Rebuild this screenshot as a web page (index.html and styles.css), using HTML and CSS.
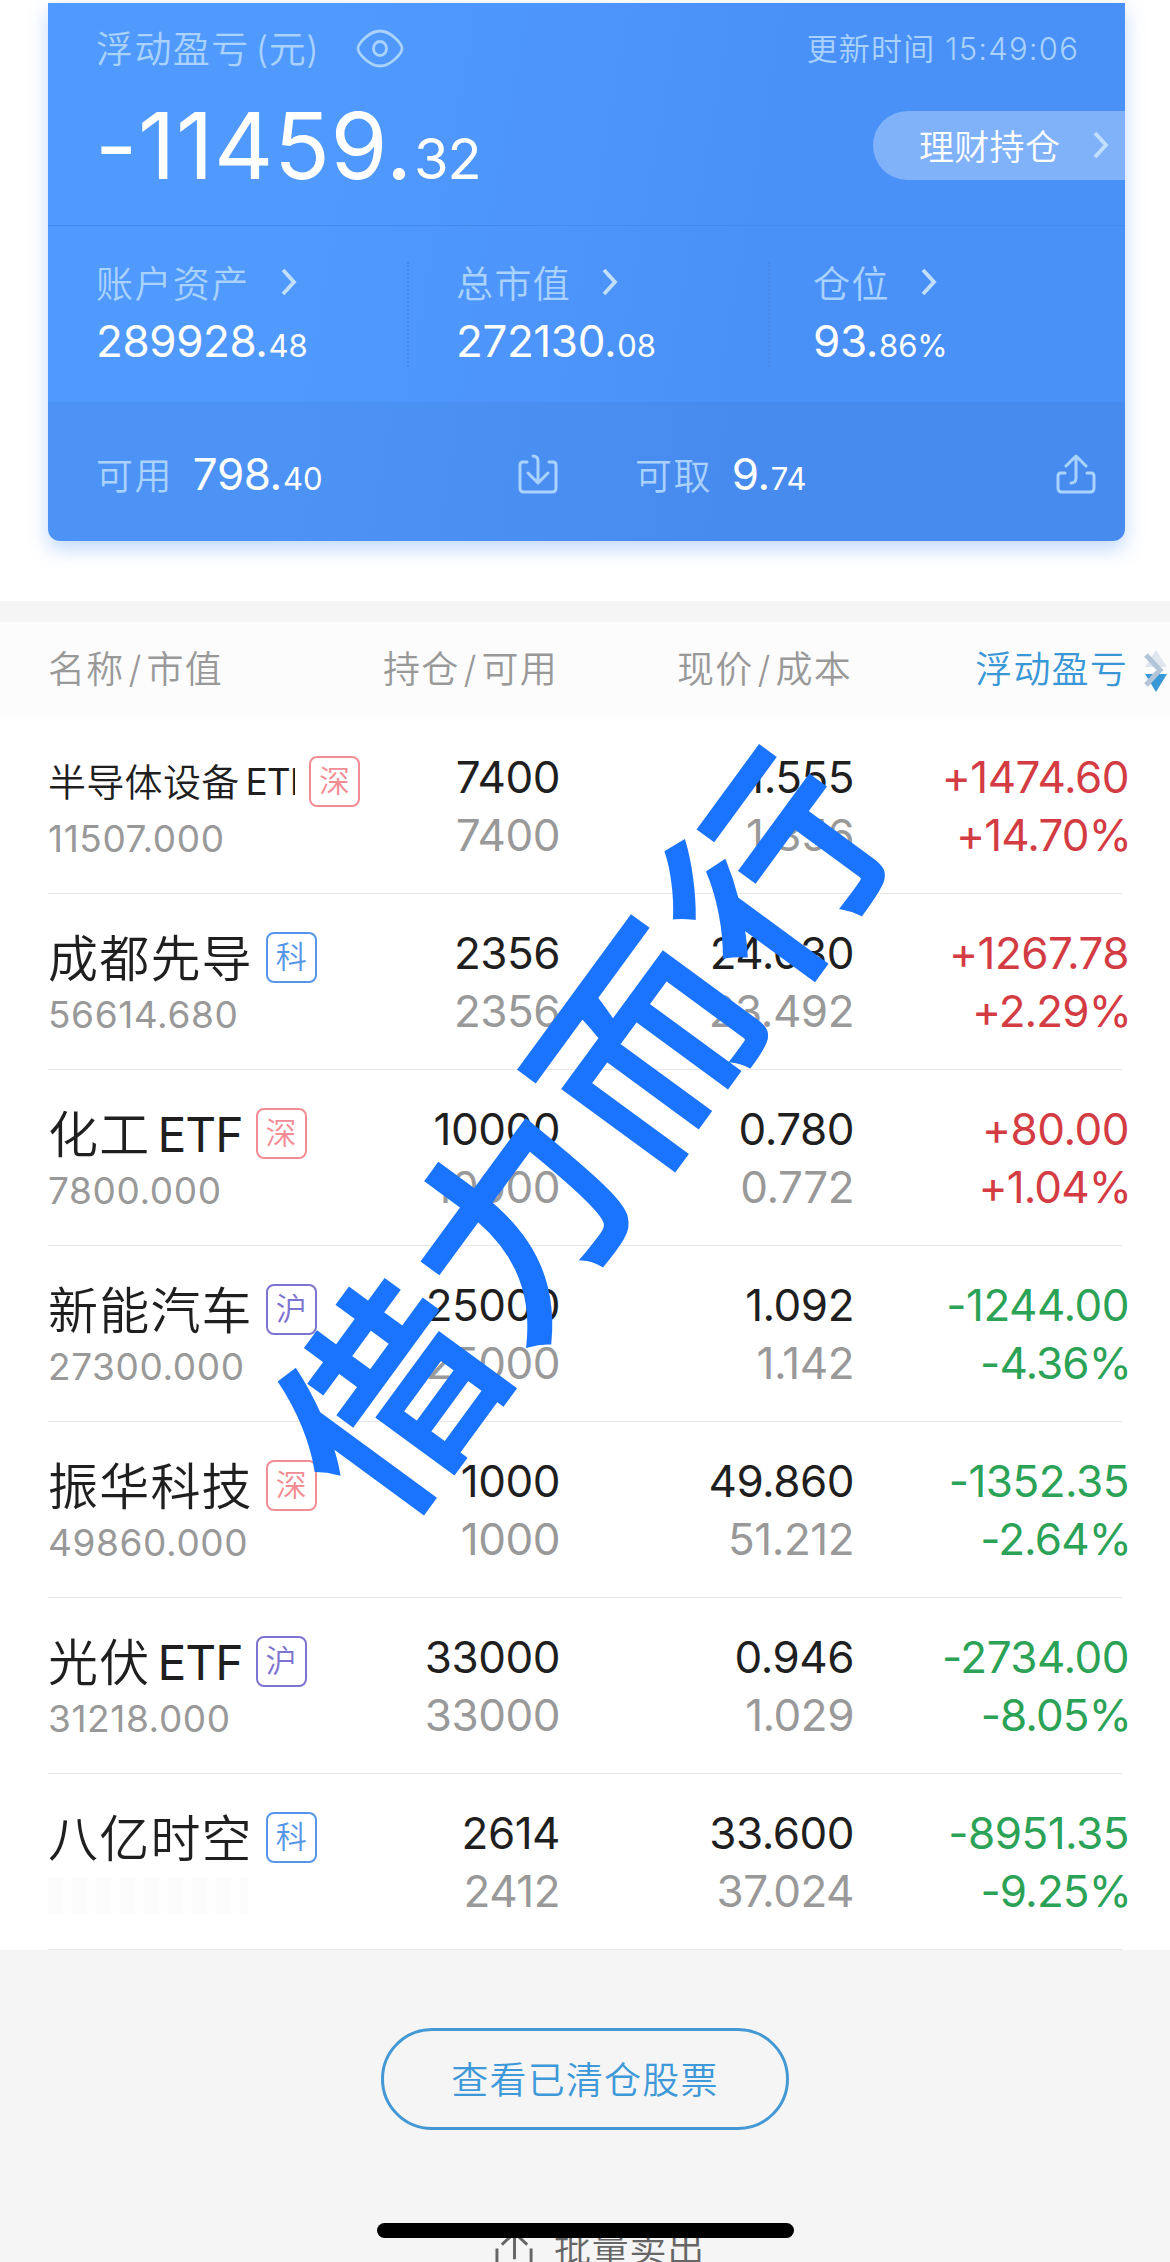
FILE: index.html
```
<!DOCTYPE html>
<html lang="zh-CN">
<head>
  <meta charset="UTF-8">
  <meta name="viewport" content="width=device-width, initial-scale=1.0">
  <title>持仓</title>
  <link rel="stylesheet" href="styles.css">
</head>
<body>
  <div class="page">
    <div class="card">
      <div class="summary">
        <div class="summary-top">
          <span class="label">浮动盈亏<span class="paren">(元)</span></span>
          <svg class="eye" viewBox="0 0 48 39" fill="none" stroke="currentColor" stroke-width="2.8">
            <path d="M2 19.500C2 15 13 2 24 2s22 13 22 17.500-11 17.500-22 17.500S2 24 2 19.500z"/>
            <ellipse cx="24" cy="19.500" rx="6.500" ry="7"/>
          </svg>
          <span class="update">更新时间 <span class="time">15:49:06</span></span>
        </div>
        <div class="summary-main">
          <div class="profit">-11459.<small>32</small></div>
          <div class="pill">
            <span>理财持仓</span>
            <svg class="chevron" viewBox="0 0 16 28"><path d="M2 2l11 12L2 26"/></svg>
          </div>
        </div>
      </div>
      <div class="stats">
        <div class="stat">
          <div class="label">账户资产<svg class="chevron" viewBox="0 0 16 28"><path d="M2 2l11 12L2 26"/></svg></div>
          <div class="value">289928.<small>48</small></div>
        </div>
        <div class="stat">
          <div class="label">总市值<svg class="chevron" viewBox="0 0 16 28"><path d="M2 2l11 12L2 26"/></svg></div>
          <div class="value">272130.<small>08</small></div>
        </div>
        <div class="stat">
          <div class="label">仓位<svg class="chevron" viewBox="0 0 16 28"><path d="M2 2l11 12L2 26"/></svg></div>
          <div class="value">93.<small>86%</small></div>
        </div>
      </div>
      <div class="cash">
        <div class="cash-item">
          <span class="label">可用</span>
          <span class="value">798.<small>40</small></span>
          <svg class="transfer" viewBox="0 0 40 40">
            <path d="M9 8H5q-3 0-3 3v23q0 4 4 4h28q4 0 4-4V11q0-3-3-3h-4"/>
            <path d="M15 2q5 0 5 5v21M10 19l10 10 10-10"/>
          </svg>
        </div>
        <div class="cash-item">
          <span class="label">可取</span>
          <span class="value">9.<small>74</small></span>
          <svg class="transfer" viewBox="0 0 40 40">
            <path d="M9 19H5q-3 0-3 3v12q0 4 4 4h28q4 0 4-4V22q0-3-3-3h-4"/>
            <path d="M15 29q5 0 5-5V3M10 12L20 2l10 10"/>
          </svg>
        </div>
      </div>
    </div>

    <div class="table">
      <div class="thead">
        <span>名称<i>/</i>市值</span>
        <span>持仓<i>/</i>可用</span>
        <span>现价<i>/</i>成本</span>
        <span class="active">浮动盈亏</span>
        <svg class="sort" viewBox="0 0 26 42">
          <path d="M13 0l11 17H2z" fill="#dfe6ee"/>
          <path d="M2 24h22L13 42z" fill="#3a97d6"/>
          <path d="M3 5l14 15L3 35" fill="none" stroke="#b4c4d8" stroke-width="5"/>
        </svg>
      </div>

      <div class="row">
        <div class="stock">
          <div class="name"><span class="long">半导体设备<b>ETF</b></span><em class="tag sz">深</em></div>
          <div class="worth">11507.000</div>
        </div>
        <div class="num"><div>7400</div><div>7400</div></div>
        <div class="num"><div>1.555</div><div>1.356</div></div>
        <div class="num up"><div>+1474.60</div><div>+14.70%</div></div>
      </div>
      <div class="row">
        <div class="stock">
          <div class="name"><span>成都先导</span><em class="tag kc">科</em></div>
          <div class="worth">56614.680</div>
        </div>
        <div class="num"><div>2356</div><div>2356</div></div>
        <div class="num"><div>24.030</div><div>23.492</div></div>
        <div class="num up"><div>+1267.78</div><div>+2.29%</div></div>
      </div>
      <div class="row">
        <div class="stock">
          <div class="name"><span>化工<b>ETF</b></span><em class="tag sz">深</em></div>
          <div class="worth">7800.000</div>
        </div>
        <div class="num"><div>10000</div><div>10000</div></div>
        <div class="num"><div>0.780</div><div>0.772</div></div>
        <div class="num up"><div>+80.00</div><div>+1.04%</div></div>
      </div>
      <div class="row">
        <div class="stock">
          <div class="name"><span>新能汽车</span><em class="tag sh">沪</em></div>
          <div class="worth">27300.000</div>
        </div>
        <div class="num"><div>25000</div><div>25000</div></div>
        <div class="num"><div>1.092</div><div>1.142</div></div>
        <div class="num down"><div>-1244.00</div><div>-4.36%</div></div>
      </div>
      <div class="row">
        <div class="stock">
          <div class="name"><span>振华科技</span><em class="tag sz">深</em></div>
          <div class="worth">49860.000</div>
        </div>
        <div class="num"><div>1000</div><div>1000</div></div>
        <div class="num"><div>49.860</div><div>51.212</div></div>
        <div class="num down"><div>-1352.35</div><div>-2.64%</div></div>
      </div>
      <div class="row">
        <div class="stock">
          <div class="name"><span>光伏<b>ETF</b></span><em class="tag sh">沪</em></div>
          <div class="worth">31218.000</div>
        </div>
        <div class="num"><div>33000</div><div>33000</div></div>
        <div class="num"><div>0.946</div><div>1.029</div></div>
        <div class="num down"><div>-2734.00</div><div>-8.05%</div></div>
      </div>
      <div class="row">
        <div class="stock">
          <div class="name"><span>八亿时空</span><em class="tag kc">科</em></div>
          <div class="smudge"></div>
        </div>
        <div class="num"><div>2614</div><div>2412</div></div>
        <div class="num"><div>33.600</div><div>37.024</div></div>
        <div class="num down"><div>-8951.35</div><div>-9.25%</div></div>
      </div>
    </div>

    <div class="bottom">
      <button class="cleared">查看已清仓股票</button>
      <div class="batch">
        <svg viewBox="0 0 40 40"><path d="M2 19v18M37 19v18M20 30V4M7 15L20 3l13 12"/></svg>
        <span>批量卖出</span>
      </div>
    </div>

    <div class="home-bar"></div>
    <div class="watermark">借力而行</div>
  </div>
</body>
</html>
```

FILE: styles.css
```
* {
  box-sizing: border-box;
}
body {
  margin: 0;
  background: #fff;
  font-family: "Inter", "Noto Sans CJK SC", sans-serif;
  color: #1f1f1f;
}
.page {
  position: relative;
  width: 1170px;
  height: 2262px;
  padding-top: 3px;
  overflow: hidden;
  display: flex;
  flex-direction: column;
}
small {
  line-height: 1;
}

/* account card */
.card {
  flex: none;
  width: 1077px;
  height: 538px;
  margin: 0 0 60px 48px;
  border-radius: 0 0 12px 12px;
  background: linear-gradient(100deg, #5099fd 25%, #4a91f7 65%);
  color: #fff;
  overflow: hidden;
  box-shadow: 0 8px 20px rgba(74, 145, 247, 0.35);
}
.label {
  color: #a9d2fd;
  font-size: 37px;
  letter-spacing: 1.4px;
  font-weight: 350;
}
.summary {
  height: 223px;
  border-bottom: 1px solid #4589ea;
}
.summary-top {
  display: flex;
  align-items: center;
  height: 88px;
  padding: 0 46px 0 48px;
}
.paren {
  margin-left: 6px;
  letter-spacing: 0.3px;
}
.eye {
  width: 48px;
  height: 39px;
  margin: 2px 0 0 37px;
  color: #a9d2fd;
}
.update {
  margin-left: auto;
  padding-bottom: 2px;
  color: #a9d2fd;
  font-size: 31px;
  font-weight: 350;
  letter-spacing: 1.2px;
}
.summary-main {
  display: flex;
  justify-content: space-between;
  padding: 20px 0 0 47px;
}
.profit {
  font-size: 92px;
  font-weight: 380;
  line-height: 70px;
  letter-spacing: 0.6px;
}
.profit small {
  margin-left: 1px;
  font-size: 56px;
  letter-spacing: -1px;
}
.pill {
  display: flex;
  align-items: center;
  justify-content: space-between;
  width: 252px;
  height: 69px;
  padding: 0 16px 2px 46px;
  border-radius: 35px 0 0 35px;
  background: rgba(255, 255, 255, 0.3);
  font-size: 35px;
  font-weight: 350;
  letter-spacing: 0.3px;
}
.chevron {
  width: 16px;
  height: 28px;
  fill: none;
  stroke: #c3dffe;
  stroke-width: 3.8;
}
.stats {
  display: grid;
  grid-template-columns: 359px 361px 1fr;
  grid-template-rows: 105px;
  height: 176px;
  padding-top: 36px;
}
.stat {
  padding-left: 48px;
}
.stat + .stat {
  border-left: 2px dotted #4788e8;
  padding-left: 47px;
}
.stat:last-child {
  padding-left: 43px;
}
.stat .label {
  display: flex;
  align-items: center;
  height: 39px;
}
.stat .chevron {
  margin-left: 31px;
}
.value {
  font-size: 44px;
  letter-spacing: -0.4px;
}
.stat .value {
  line-height: 80px;
}
.value small {
  margin-left: 1px;
  font-size: 31px;
  letter-spacing: 0;
}
.cash {
  display: grid;
  grid-template-columns: 539px 1fr;
  height: 139px;
  background: rgba(50, 80, 150, 0.08);
}
.cash-item {
  display: flex;
  align-items: center;
  padding: 4px 29px 0 48px;
}
.cash-item .value {
  margin-left: 20px;
}
.transfer {
  width: 40px;
  height: 40px;
  margin-left: auto;
  fill: none;
  stroke: #a9d2fd;
  stroke-width: 3;
  stroke-linejoin: round;
  stroke-linecap: round;
}

/* positions */
.table {
  flex: none;
  border-top: 21px solid #f5f5f5;
}
.thead,
.row {
  display: grid;
  grid-template-columns: 312px 200px 294px 275px;
}
.thead {
  grid-template-columns: 312px 198px 294px 276px 1fr;
  height: 96px;
  padding-left: 48px;
  background: #fcfcfc;
  color: #999;
  font-size: 37px;
  font-weight: 350;
  letter-spacing: 1.2px;
  line-height: 96px;
  text-align: right;
}
.thead i {
  margin: 0 4px;
  font-style: normal;
}
.thead span:first-child {
  text-align: left;
}
.active {
  color: #3a97d6;
}
.sort {
  width: 26px;
  height: 42px;
  margin: 28px 0 0 15px;
}
.row {
  height: 176px;
  margin: 0 48px;
  border-bottom: 1px solid #e6e6e6;
}
.stock {
  padding-top: 31px;
}
.name {
  display: flex;
  align-items: center;
  height: 64px;
  font-size: 50px;
  letter-spacing: 1.2px;
  white-space: nowrap;
}
.name span {
  padding-bottom: 5px;
  font-weight: 350;
}
.name b {
  position: relative;
  top: -1px;
  margin-left: 7px;
  font-size: 48px;
  font-weight: 400;
  letter-spacing: -1px;
}
.name .long {
  width: 248px;
  margin-right: 1px;
  padding-bottom: 4px;
  overflow: hidden;
  font-size: 38px;
  letter-spacing: 0.3px;
}
.name .long b {
  margin-left: 6px;
  font-size: 37px;
}
.tag {
  flex: none;
  width: 51px;
  height: 51px;
  margin-left: 13px;
  border: 2px solid;
  border-radius: 8px;
  font-size: 31px;
  font-style: normal;
  font-weight: 350;
  letter-spacing: 0;
  line-height: 46px;
  text-align: center;
}
.sz {
  color: #f28d95;
}
.kc {
  color: #5596e8;
}
.sh {
  color: #7d74cf;
}
.worth {
  color: #999;
  font-size: 37px;
  line-height: 52px;
  letter-spacing: 0.6px;
}
.smudge {
  width: 200px;
  height: 36px;
  margin-top: 8px;
  background: repeating-linear-gradient(90deg, #fcfcfc 0 14px, #fefefe 14px 24px);
}
.num {
  padding-top: 30px;
  font-size: 44px;
  letter-spacing: -0.5px;
  line-height: 58px;
  text-align: right;
}
.num div + div {
  color: #999;
}
.num.up div {
  color: #d33c43;
}
.num.down div {
  color: #2ba256;
}
.num.up div + div,
.num.down div + div {
  margin-right: -2px;
  letter-spacing: -0.9px;
}

/* footer */
.bottom {
  flex: 1;
  display: flex;
  flex-direction: column;
  align-items: center;
  padding-top: 78px;
  background: #f5f5f5;
}
.cleared {
  flex: none;
  width: 408px;
  height: 102px;
  padding: 0 0 3px;
  border: 3px solid #4499d5;
  border-radius: 51px;
  background: none;
  color: #3f99d8;
  font-family: inherit;
  font-size: 37px;
  font-weight: 350;
  letter-spacing: 1.2px;
}
.batch {
  display: flex;
  align-items: center;
  gap: 20px;
  margin-top: 95px;
  margin-left: 30px;
  color: #666;
  font-size: 37px;
  font-weight: 350;
  letter-spacing: 0.8px;
  line-height: 48px;
}
.batch svg {
  width: 39px;
  height: 39px;
  fill: none;
  stroke: #666;
  stroke-width: 3;
}
.home-bar {
  position: absolute;
  left: 377px;
  bottom: 24px;
  width: 417px;
  height: 15px;
  border-radius: 8px;
  background: #000;
}
.watermark {
  position: absolute;
  left: 587px;
  top: 1132px;
  transform: translate(-50%, -50%) rotate(-53.8deg);
  color: #1a74ff;
  font-size: 210px;
  font-weight: 500;
  letter-spacing: 8px;
  line-height: 1;
  white-space: nowrap;
  -webkit-text-stroke: 3px #1a74ff;
}
```
